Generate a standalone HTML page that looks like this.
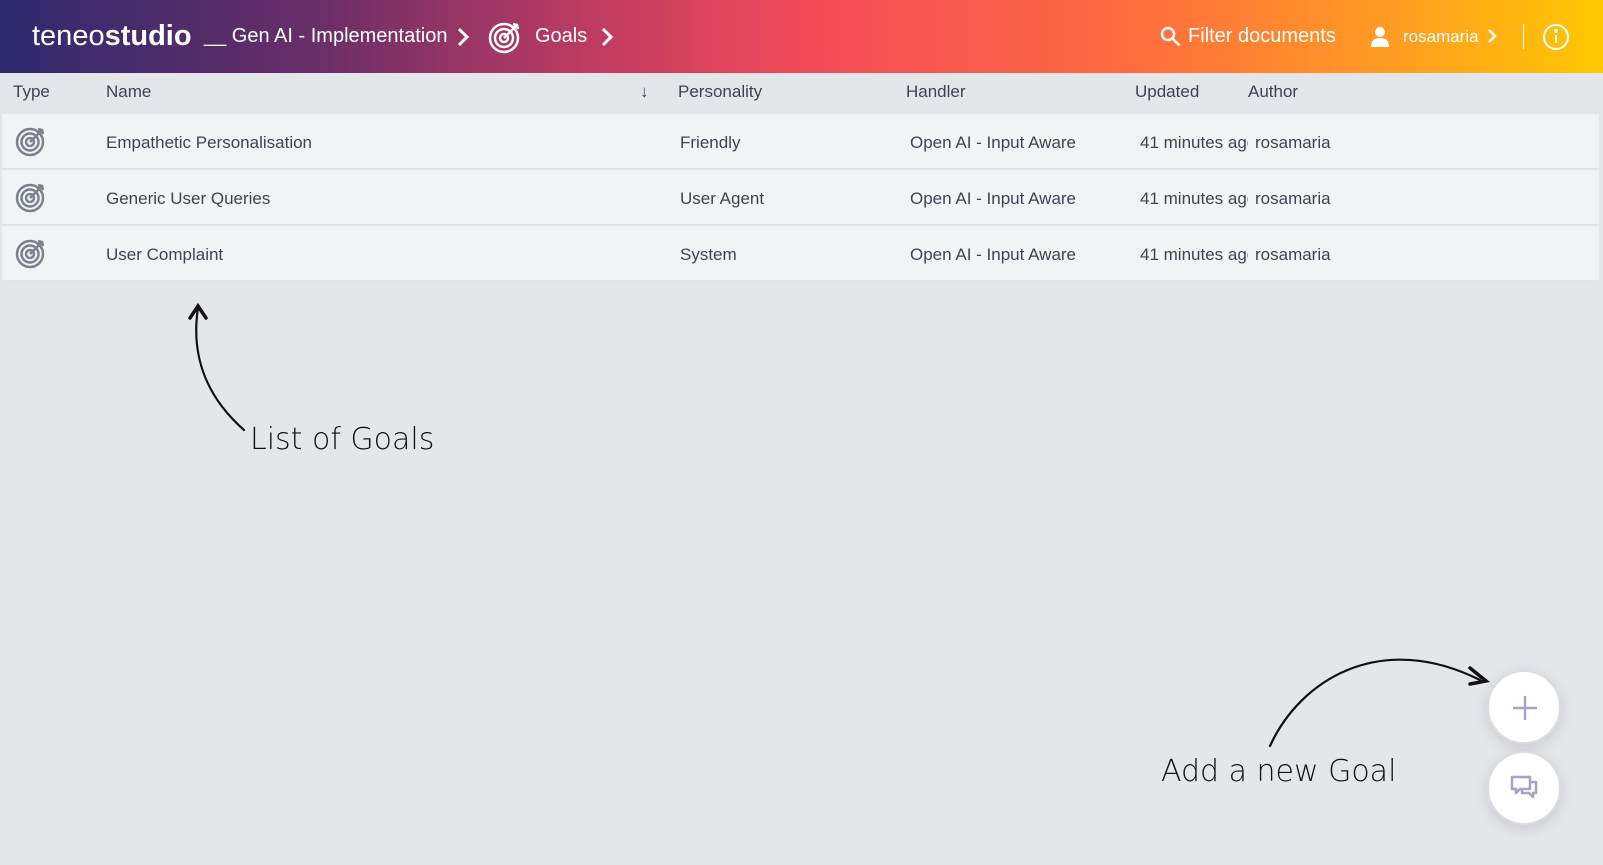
<!DOCTYPE html>
<html><head><meta charset="utf-8"><style>
*{margin:0;padding:0;box-sizing:border-box}
body{width:1603px;height:865px;overflow:hidden;background:#e5e6ea;font-family:"Liberation Sans",sans-serif;position:relative;color:#3d4450}
.hdr{position:absolute;left:0;top:0;width:1603px;height:73px;background:linear-gradient(90deg,#2e2a6e 0%,#6a2e68 20%,#b63a62 35%,#f24a5a 50%,#ff6a40 70%,#ffa020 88%,#ffc800 100%);color:#fff}
.hdr span{position:absolute;top:25px;font-size:20px}
.th{position:absolute;top:82px;font-size:17px;color:#3d4450}
.row{position:absolute;left:2px;width:1597px;height:55px;background:#f2f3f5;border-bottom:1px solid #e2e3e6}
.row span{position:absolute;top:19px;font-size:17px;color:#3d4450}
.fab{position:absolute;width:74px;height:74px;border-radius:50%;background:#fff;box-shadow:0 4px 14px rgba(0,0,0,.12);border:2px solid #dcdde2}
.hand{position:absolute;font-family:"DejaVu Sans",sans-serif;font-size:30px;color:#111;font-weight:300}
</style></head><body>
<div class="hdr">
<span style="left:32px;top:20px;font-size:29px">teneo<b>studio</b></span>
<span style="left:204px">__ Gen AI - Implementation</span>
<svg style="position:absolute;left:456px;top:27px" width="14" height="20"><path d="M3 2l8 8-8 8" stroke="#fff" stroke-width="3" fill="none"/></svg>
<svg style="position:absolute;left:488px;top:20px" width="34" height="34" viewBox="0 0 34 34" fill="none" stroke="#fff" stroke-width="2.5"><circle cx="16" cy="18" r="14"/><circle cx="16" cy="18" r="9"/><circle cx="16" cy="18" r="4"/><path d="M16 18L29 5M25 4l4 1 1 4"/></svg>
<span style="left:535px">Goals</span>
<svg style="position:absolute;left:600px;top:27px" width="14" height="20"><path d="M3 2l8 8-8 8" stroke="#fff" stroke-width="3" fill="none"/></svg>
<svg style="position:absolute;left:1160px;top:26px" width="22" height="22" fill="none" stroke="#fff" stroke-width="2.5"><circle cx="8" cy="8" r="6"/><path d="M12.5 12.5l7 7"/></svg>
<span style="left:1188px">Filter documents</span>
<svg style="position:absolute;left:1370px;top:26px" width="20" height="22" fill="#fff"><circle cx="10" cy="6" r="5"/><path d="M1 21c0-7 4-9 9-9s9 2 9 9z"/></svg>
<span style="left:1403px;top:27px;font-size:17px">rosamaria</span>
<svg style="position:absolute;left:1486px;top:28px" width="12" height="16"><path d="M3 2l6 6-6 6" stroke="#fff" stroke-width="2.5" fill="none"/></svg>
<div style="position:absolute;left:1523px;top:24px;width:1px;height:25px;background:#fff"></div>
<svg style="position:absolute;left:1542px;top:23px" width="28" height="28" fill="none" stroke="#fff" stroke-width="2"><circle cx="14" cy="14" r="12"/><path d="M14 12v8"/><circle cx="14" cy="8" r="1" fill="#fff"/></svg>
</div>
<div class="th" style="left:13px">Type</div>
<div class="th" style="left:106px">Name</div>
<div class="th" style="left:640px">↓</div>
<div class="th" style="left:678px">Personality</div>
<div class="th" style="left:906px">Handler</div>
<div class="th" style="left:1135px">Updated</div>
<div class="th" style="left:1248px">Author</div>
<div class="row" style="top:114px"><svg style="position:absolute;left:12px;top:10px" width="34" height="34" viewBox="0 0 34 34" fill="none" stroke="#7c818c" stroke-width="2.5"><circle cx="16" cy="18" r="13"/><circle cx="16" cy="18" r="8.5"/><circle cx="16" cy="18" r="4"/><path d="M16 18L28 6M24 5l4 1 1 4"/></svg><span style="left:104px">Empathetic Personalisation</span><span style="left:678px">Friendly</span><span style="left:908px">Open AI - Input Aware</span><span style="left:1138px;width:108px;overflow:hidden;white-space:nowrap">41 minutes ago</span><span style="left:1253px">rosamaria</span></div>
<div class="row" style="top:170px"><svg style="position:absolute;left:12px;top:10px" width="34" height="34" viewBox="0 0 34 34" fill="none" stroke="#7c818c" stroke-width="2.5"><circle cx="16" cy="18" r="13"/><circle cx="16" cy="18" r="8.5"/><circle cx="16" cy="18" r="4"/><path d="M16 18L28 6M24 5l4 1 1 4"/></svg><span style="left:104px">Generic User Queries</span><span style="left:678px">User Agent</span><span style="left:908px">Open AI - Input Aware</span><span style="left:1138px;width:108px;overflow:hidden;white-space:nowrap">41 minutes ago</span><span style="left:1253px">rosamaria</span></div>
<div class="row" style="top:226px"><svg style="position:absolute;left:12px;top:10px" width="34" height="34" viewBox="0 0 34 34" fill="none" stroke="#7c818c" stroke-width="2.5"><circle cx="16" cy="18" r="13"/><circle cx="16" cy="18" r="8.5"/><circle cx="16" cy="18" r="4"/><path d="M16 18L28 6M24 5l4 1 1 4"/></svg><span style="left:104px">User Complaint</span><span style="left:678px">System</span><span style="left:908px">Open AI - Input Aware</span><span style="left:1138px;width:108px;overflow:hidden;white-space:nowrap">41 minutes ago</span><span style="left:1253px">rosamaria</span></div>
<svg style="position:absolute;left:0;top:0" width="1603" height="865" fill="none" stroke="#111" stroke-width="2.2" stroke-linecap="round">
<path d="M244 430C210 400 190 360 198 308"/><path d="M190 318l8-12 8 12" stroke-width="3.5"/>
<path d="M1270 746C1300 680 1380 630 1480 680"/><path d="M1470 668l16 13-16 3" stroke-width="3.5"/>
</svg>
<div class="hand" style="left:250px;top:422px">List of Goals</div>
<div class="hand" style="left:1161px;top:754px">Add a new Goal</div>
<div class="fab" style="left:1487px;top:670px"><svg style="position:absolute;left:22px;top:22px" width="28" height="28" stroke="#a8a3c6" stroke-width="2.5"><path d="M14 2v24M2 14h24"/></svg></div>
<div class="fab" style="left:1487px;top:751px"><svg style="position:absolute;left:21px;top:21px" width="30" height="30" fill="none" stroke="#a8a3c6" stroke-width="2.5" stroke-linejoin="round"><path d="M2 3h18v12H10l-4 4v-4H2z"/><path d="M20 8h6v11h-3v4l-4-4h-7v-4"/></svg></div>
</body></html>
